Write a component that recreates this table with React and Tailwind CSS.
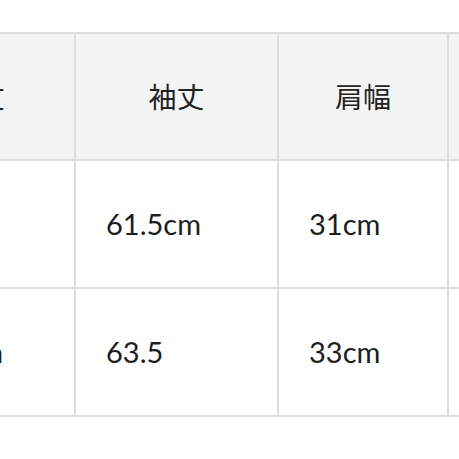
import React from 'react'

const HEADERS = ['着丈', '袖丈', '肩幅', '身幅']

const ROWS = [
    ['66cm', '61.5cm', '31cm', '48cm'],
    ['68.5cm', '63.5', '33cm', '50cm'],
]

const App = () => {
    return (
        <div className="w-[459px] h-[459px] overflow-hidden bg-white" style={{ fontFamily: 'Lato, "Noto Sans CJK JP", sans-serif' }}>
            <div className="mt-[32px] -ml-[122px] w-max grid grid-cols-[194px_201px_168px_200px] gap-[2px] p-[2px] bg-[#dddddd]">
                {HEADERS.map((h) => (
                    <div key={h} className="h-[125px] bg-[#f4f4f4] flex items-center justify-center text-[28px] text-[#222222]">
                        {h}
                    </div>
                ))}
                {ROWS.map((row, r) =>
                    row.map((cell, c) => (
                        <div
                            key={`${r}-${c}`}
                            className={`h-[126px] bg-white flex items-center text-[29px] text-[#1e1e1e] ${c === 0 ? 'pl-[28px]' : 'pl-[30px]'}`}
                        >
                            {cell}
                        </div>
                    ))
                )}
            </div>
        </div>
    )
}

export default App
